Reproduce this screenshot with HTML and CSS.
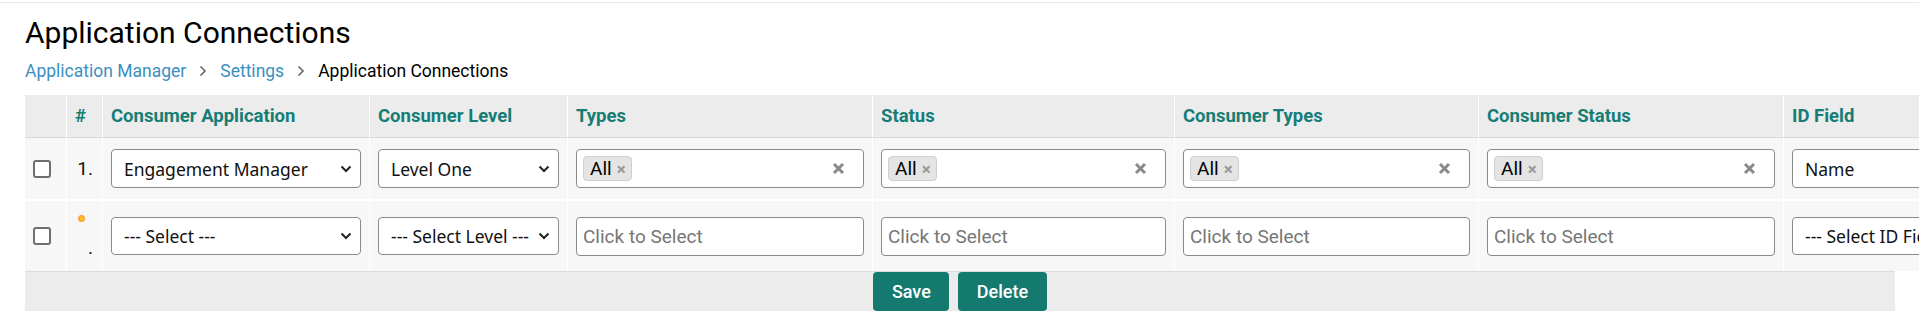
FILE: index.html
```html
<!DOCTYPE html>
<html lang="en">
<head>
  <meta charset="UTF-8" />
  <meta name="viewport" content="width=device-width, initial-scale=1.0"/>
  <title>Application Connections</title>
  <link rel="stylesheet" href="styles.css">
</head>
<body>
  <div class="topbar"></div>
  <div class="page">
    <h1 class="page-title">Application Connections</h1>
    <nav class="crumbs">
      <a href="#">Application Manager</a>
      <svg class="crumb-sep" width="8" height="12" viewBox="0 0 8 12"><path d="M1.5 1.5l4.5 4.5-4.5 4.5" /></svg>
      <a href="#">Settings</a>
      <svg class="crumb-sep" width="8" height="12" viewBox="0 0 8 12"><path d="M1.5 1.5l4.5 4.5-4.5 4.5" /></svg>
      <span class="current">Application Connections</span>
    </nav>

    <div class="grid-wrap">
      <table class="conn-table">
        <colgroup>
          <col class="c-check">
          <col class="c-num">
          <col class="c-app">
          <col class="c-level">
          <col class="c-multi">
          <col class="c-multi2">
          <col class="c-multi3">
          <col class="c-multi">
          <col class="c-id">
        </colgroup>
        <thead>
          <tr>
            <th></th>
            <th>#</th>
            <th>Consumer Application</th>
            <th>Consumer Level</th>
            <th>Types</th>
            <th>Status</th>
            <th>Consumer Types</th>
            <th>Consumer Status</th>
            <th>ID Field</th>
          </tr>
        </thead>
        <tbody>
          <tr>
            <td><input type="checkbox" class="row-check"></td>
            <td class="num">1.</td>
            <td><select class="field"><option>Engagement Manager</option></select></td>
            <td><select class="field"><option>Level One</option></select></td>
            <td>
              <div class="chip-select">
                <span class="chip">All <span class="chip-x">&times;</span></span>
                <svg class="clear-x" width="13" height="13" viewBox="0 0 13 13"><path d="M2 2l9 9M11 2l-9 9" /></svg>
              </div>
            </td>
            <td>
              <div class="chip-select">
                <span class="chip">All <span class="chip-x">&times;</span></span>
                <svg class="clear-x" width="13" height="13" viewBox="0 0 13 13"><path d="M2 2l9 9M11 2l-9 9" /></svg>
              </div>
            </td>
            <td>
              <div class="chip-select">
                <span class="chip">All <span class="chip-x">&times;</span></span>
                <svg class="clear-x" width="13" height="13" viewBox="0 0 13 13"><path d="M2 2l9 9M11 2l-9 9" /></svg>
              </div>
            </td>
            <td>
              <div class="chip-select">
                <span class="chip">All <span class="chip-x">&times;</span></span>
                <svg class="clear-x" width="13" height="13" viewBox="0 0 13 13"><path d="M2 2l9 9M11 2l-9 9" /></svg>
              </div>
            </td>
            <td><select class="field"><option>Name</option></select></td>
          </tr>
          <tr class="new-row">
            <td><input type="checkbox" class="row-check"></td>
            <td class="num">
              <span class="new-dot"></span>
              <div class="num-text">.</div>
            </td>
            <td><select class="field"><option>--- Select ---</option></select></td>
            <td><select class="field"><option>--- Select Level ---</option></select></td>
            <td><input type="text" class="chip-input" placeholder="Click to Select"></td>
            <td><input type="text" class="chip-input" placeholder="Click to Select"></td>
            <td><input type="text" class="chip-input" placeholder="Click to Select"></td>
            <td><input type="text" class="chip-input" placeholder="Click to Select"></td>
            <td><select class="field"><option>--- Select ID Field ---</option></select></td>
          </tr>
        </tbody>
      </table>
      <div class="grid-footer">
        <button class="btn">Save</button>
        <button class="btn">Delete</button>
      </div>
    </div>
  </div>
</body>
</html>
```

FILE: styles.css
```css
* {
  box-sizing: border-box;
}
html, body {
  overflow-x: hidden;
}
body {
  margin: 0;
  padding-top: 2px;
  background: #ffffff;
  color: #111;
  font-family: Roboto, 'Liberation Sans', sans-serif;
}
.topbar {
  height: 1px;
  background: #e9e9e9;
}
.page {
  padding: 0 24px 0 25px;
}
.page-title {
  margin: 12px 0 8px;
  font-size: 30px;
  font-weight: 400;
  line-height: 36px;
  color: #000;
}
.crumbs {
  display: flex;
  align-items: center;
  gap: 13px;
  font-size: 17.5px;
  line-height: 24px;
  margin-bottom: 12px;
}
.crumbs a {
  color: #3b8fbf;
  text-decoration: none;
}
.crumbs .current {
  color: #000;
}
.crumb-sep {
  fill: none;
  stroke: #666;
  stroke-width: 1.6;
}

/* table */
.grid-wrap {
  width: 100%;
}
.conn-table {
  table-layout: fixed;
  border-collapse: separate;
  border-spacing: 0;
  width: 2040px;
}
.c-check { width: 42px; }
.c-num { width: 36px; }
.c-app { width: 267px; }
.c-level { width: 198px; }
.c-multi { width: 305px; }
.c-multi2 { width: 302px; }
.c-multi3 { width: 304px; }
.c-id { width: 281px; }

.conn-table th {
  background: #ececec;
  color: #167d76;
  font-size: 18.5px;
  font-weight: 700;
  text-align: left;
  line-height: 22px;
  padding: 10px 8px;
  border-right: 1px solid #fff;
  border-bottom: 1px solid #d9d9d9;
}
.conn-table td {
  background: #f7f7f7;
  padding: 11px 8px;
  vertical-align: middle;
  border-right: 1px solid #fff;
  border-bottom: 2px solid #fff;
}
.conn-table tbody tr:last-child td {
  border-bottom: none;
}
.conn-table td.num {
  text-align: right;
  font-size: 19px;
  padding-right: 9px;
}
.row-check {
  appearance: none;
  display: block;
  width: 18px;
  height: 18px;
  margin: 0;
  border: 2px solid #6f6f6f;
  border-radius: 3px;
  background: #fff;
}
.new-dot {
  display: block;
  width: 7px;
  height: 7px;
  margin: 3px 0 0 3px;
  border-radius: 50%;
  background: radial-gradient(circle, #ffe000 0, #ffc21a 30%, #ff9646 60%, #f6ad92 100%);
}
.num-text {
  margin-top: 14px;
  line-height: 24px;
}

.field {
  appearance: none;
  width: 100%;
  height: 39px;
  padding: 0 28px 0 12px;
  border: 1px solid #8a8a8a;
  border-radius: 4px;
  background: #fff url("data:image/svg+xml,%3Csvg xmlns='http://www.w3.org/2000/svg' width='12' height='8' viewBox='0 0 12 8'%3E%3Cpath d='M1.5 1.5l4.5 4.5 4.5-4.5' fill='none' stroke='%23222' stroke-width='2'/%3E%3C/svg%3E") no-repeat right 8px center;
  font-family: 'Noto Sans', 'Open Sans', sans-serif;
  font-size: 17.5px;
  color: #111;
}
.new-row .field {
  height: 38px;
}
.chip-select {
  display: flex;
  align-items: center;
  justify-content: space-between;
  height: 39px;
  padding: 0 18px 0 6px;
  border: 1px solid #8a8a8a;
  border-radius: 4px;
  background: #fff;
}
.chip {
  display: inline-flex;
  align-items: center;
  gap: 5px;
  height: 25px;
  padding: 0 5px 0 6px;
  background: #e4e4e4;
  border: 1px solid #cfcfcf;
  border-radius: 4px;
  font-size: 19px;
  color: #000;
}
.chip-x {
  color: #999;
  font-weight: 700;
  font-size: 17px;
}
.clear-x {
  fill: none;
  stroke: #8a8a8a;
  stroke-width: 3;
}
.chip-input {
  width: 100%;
  height: 39px;
  padding: 0 6px;
  border: 1px solid #8a8a8a;
  border-radius: 4px;
  background: #fff;
  font-family: Roboto, 'Liberation Sans', sans-serif;
  font-size: 19px;
}
.chip-input::placeholder {
  color: #767676;
}

.grid-footer {
  display: flex;
  justify-content: center;
  gap: 9px;
  height: 40px;
  background: #ececec;
  border-top: 1px solid #dcdcdc;
}
.btn {
  height: 39px;
  padding: 0 18.5px;
  border: none;
  border-radius: 4px;
  background: #14796f;
  color: #fff;
  font-family: Roboto, 'Liberation Sans', sans-serif;
  font-size: 18px;
  font-weight: 500;
  cursor: pointer;
}
```
